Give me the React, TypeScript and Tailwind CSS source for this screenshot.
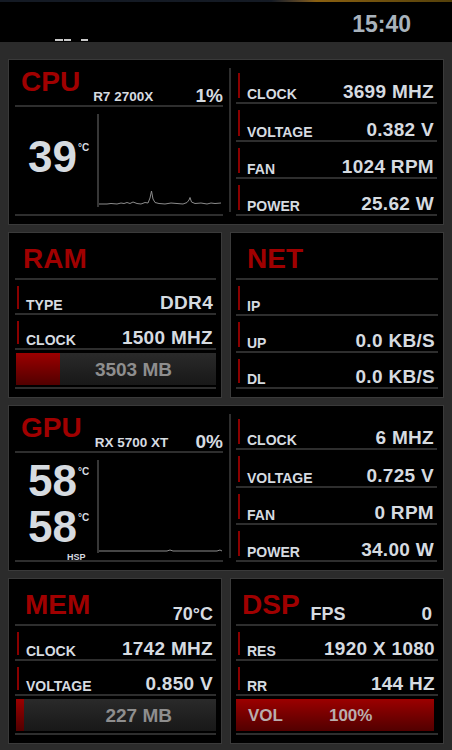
import React from "react";

type Stat = { label: string; value?: string };

const cpuPath =
  "M2,90 L10,90 L14,89.5 L20,90 L24,89 L27,89.5 L30,88.5 L33,89.5 L36,88 L40,89.5 L44,90 L48,88.5 L51,89 L53,84 L54.5,77 L56,85 L58,88.5 L62,89.5 L68,90 L74,89 L80,89.5 L86,90 L90,88.5 L92,86 L93,83.5 L94.5,88 L98,89.5 L104,89 L110,90 L114,89 L118,89.5 L124,89";
const gpuPath = "M2,91 L70,91 L73,90 L76,91 L120,91 L123,90 L125,91";

function Row({ label, value }: Stat) {
  return (
    <div className="flex flex-1 items-end border-b-2 border-[#2e2e2e] pb-[1px] pr-[3px]">
      <div className="mt-[6px] mb-[3px] ml-[2px] w-[2px] self-stretch bg-[#8a0000]" />
      <span className="ml-[7px] text-[14px] leading-none">{label}</span>
      {value && <span className="ml-auto text-[19px] leading-none tracking-[0.3px]">{value}</span>}
    </div>
  );
}

function Meter({ text, fill }: { text: string; fill: string }) {
  return (
    <div className="flex flex-1 border-b-2 border-[#2e2e2e] pt-[3px] pb-[2px] pl-[1px]">
      <div className="relative flex flex-1 items-center justify-end bg-linear-to-b from-[#2a2a2a] to-[#181818] pr-[44px]">
        <div className={`absolute inset-y-0 left-0 ${fill} bg-linear-to-b from-[#9c0000] to-[#520000]`} />
        <span className="relative text-[19px] leading-none text-[#8e8e8e]">{text}</span>
      </div>
    </div>
  );
}

function Temp({ value }: { value: string }) {
  return (
    <div className="flex items-start">
      <span className="text-[44px] leading-[38px]">{value}</span>
      <span className="mt-[5px] ml-[1px] text-[10px] leading-none">°C</span>
    </div>
  );
}

function BigPanel({
  name,
  model,
  pct,
  temps,
  path,
  rows,
}: {
  name: string;
  model: string;
  pct: string;
  temps: React.ReactNode;
  path: string;
  rows: Stat[];
}) {
  return (
    <div className="flex h-[166px] border border-[#3a3a3a] bg-black">
      <div className="flex w-[220px] flex-col px-[6px] pb-[8px]">
        <div className="flex h-[47px] items-end border-b-2 border-[#2e2e2e]">
          <span className="mb-[9px] ml-[6px] text-[28px] leading-none text-[#a00000]">{name}</span>
          <span className="mb-[2px] ml-[13px] text-[13.5px] leading-none">{model}</span>
          <span className="ml-auto text-[19px] leading-none">{pct}</span>
        </div>
        <div className="flex h-[109px] border-b-2 border-[#2e2e2e]">
          <div className="w-[82px] pl-[13px]">{temps}</div>
          <svg width="126" height="93" viewBox="0 0 126 93" className="mt-[7px]">
            <line x1="1" y1="0" x2="1" y2="93" stroke="#4a4a4a" strokeWidth="1.5" />
            <path d={path} fill="none" stroke="#8c8c8c" strokeWidth="1" />
          </svg>
        </div>
      </div>
      <div className="mt-[8px] mb-[12px] w-[2px] bg-[#2e2e2e]" />
      <div className="flex flex-1 flex-col pt-[7px] pr-[6px] pb-[8px] pl-[5px]">
        {rows.map((r) => (
          <Row key={r.label} {...r} />
        ))}
      </div>
    </div>
  );
}

function SmallPanel({
  name,
  nameMl,
  extra,
  rows,
  meter,
  pl,
}: {
  name: string;
  nameMl: string;
  extra?: React.ReactNode;
  rows: Stat[];
  meter: React.ReactNode;
  pl: string;
}) {
  return (
    <div className={`flex h-[166px] flex-col border border-[#3a3a3a] bg-black ${pl} pr-[5px] pb-[8px]`}>
      <div className="flex h-[47px] items-end border-b-2 border-[#2e2e2e]">
        <span className={`mb-[5px] ${nameMl} text-[28px] leading-none text-[#a00000]`}>{name}</span>
        {extra}
      </div>
      <div className="flex h-[109px] flex-col">
        {rows.map((r) => (
          <Row key={r.label} {...r} />
        ))}
        {meter}
      </div>
    </div>
  );
}

export default function App() {
  return (
    <div className="h-[750px] w-[452px] overflow-hidden bg-[#2b2b2b] font-['Liberation_Sans',Arial,sans-serif] font-bold text-[#d6dbe0]">
      <div className="flex h-[42px] flex-col bg-black">
        <div className="h-[2px] bg-linear-to-r from-[#141a24] from-60% via-[#8a6010] via-70% to-[#54400a]" />
        <div className="flex h-[37px] justify-end pr-[41px]">
          <span className="mt-[11px] text-[23px] leading-none text-[#a9b3bc]">15:40</span>
        </div>
        <div className="flex h-[3px] pl-[55px]">
          <div className="h-[2px] w-[8px] bg-[#c8c8c8]" />
          <div className="ml-[1px] h-[2px] w-[7px] bg-[#c8c8c8]" />
          <div className="ml-[10px] h-[2px] w-[7px] bg-[#c8c8c8]" />
        </div>
      </div>

      <div className="flex flex-col gap-[7px] px-[8px] pt-[17px]">
        <BigPanel
          name="CPU"
          model="R7 2700X"
          pct="1%"
          path={cpuPath}
          temps={
            <div className="pt-[31px]">
              <Temp value="39" />
            </div>
          }
          rows={[
            { label: "CLOCK", value: "3699 MHZ" },
            { label: "VOLTAGE", value: "0.382 V" },
            { label: "FAN", value: "1024 RPM" },
            { label: "POWER", value: "25.62 W" },
          ]}
        />

        <div className="grid grid-cols-2 gap-[8px]">
          <SmallPanel
            name="RAM"
            nameMl="ml-[8px]"
            pl="pl-[6px]"
            rows={[
              { label: "TYPE", value: "DDR4" },
              { label: "CLOCK", value: "1500 MHZ" },
            ]}
            meter={<Meter text="3503 MB" fill="w-[22%]" />}
          />
          <SmallPanel
            name="NET"
            nameMl="ml-[11px]"
            pl="pl-[5px]"
            rows={[
              { label: "IP" },
              { label: "UP", value: "0.0 KB/S" },
              { label: "DL", value: "0.0 KB/S" },
            ]}
            meter={null}
          />
        </div>

        <BigPanel
          name="GPU"
          model="RX 5700 XT"
          pct="0%"
          path={gpuPath}
          temps={
            <div className="flex h-[107px] flex-col pt-[9px]">
              <Temp value="58" />
              <div className="mt-[8px]">
                <Temp value="58" />
              </div>
              <span className="mt-[7px] ml-[39px] text-[9px] leading-none">HSP</span>
            </div>
          }
          rows={[
            { label: "CLOCK", value: "6 MHZ" },
            { label: "VOLTAGE", value: "0.725 V" },
            { label: "FAN", value: "0 RPM" },
            { label: "POWER", value: "34.00 W" },
          ]}
        />

        <div className="grid grid-cols-2 gap-[8px]">
          <SmallPanel
            name="MEM"
            nameMl="ml-[10px]"
            pl="pl-[6px]"
            extra={<span className="mb-[1px] mr-[3px] ml-auto text-[18px] leading-none">70°C</span>}
            rows={[
              { label: "CLOCK", value: "1742 MHZ" },
              { label: "VOLTAGE", value: "0.850 V" },
            ]}
            meter={<Meter text="227 MB" fill="w-[8px]" />}
          />
          <SmallPanel
            name="DSP"
            nameMl="ml-[6px]"
            pl="pl-[5px]"
            extra={
              <>
                <span className="mb-[1px] ml-[11px] text-[18px] leading-none">FPS</span>
                <span className="mb-[1px] mr-[6px] ml-auto text-[19px] leading-none">0</span>
              </>
            }
            rows={[
              { label: "RES", value: "1920 X 1080" },
              { label: "RR", value: "144 HZ" },
            ]}
            meter={
              <div className="flex flex-1 border-b-2 border-[#2e2e2e] pt-[3px] pb-[2px] pr-[4px]">
                <div className="flex flex-1 items-center bg-linear-to-b from-[#9c0000] to-[#520000] pl-[12px]">
                  <span className="text-[17px] leading-none text-[#b9adad]">VOL</span>
                  <span className="ml-[46px] text-[17px] leading-none text-[#b9adad]">100%</span>
                </div>
              </div>
            }
          />
        </div>
      </div>
    </div>
  );
}
